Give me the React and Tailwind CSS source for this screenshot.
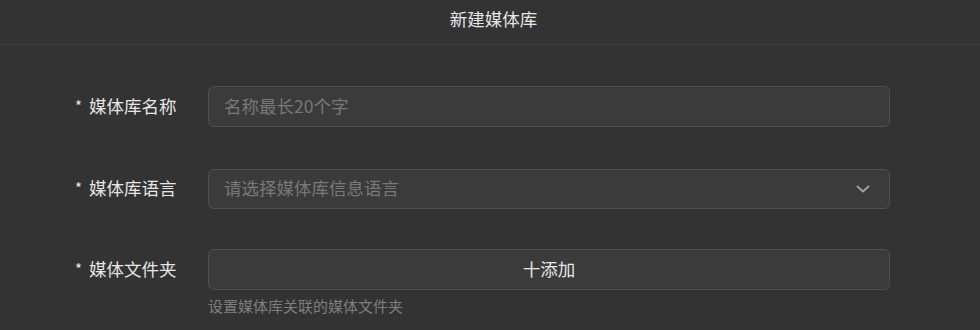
import React from 'react';

const font = { fontFamily: '"Noto Sans CJK SC", "Liberation Sans", sans-serif' };

const Label = ({ children }) => (
    <div className="w-[208px] shrink-0 pl-[75px] flex items-center text-[17.5px] text-[#e6e6e6] whitespace-nowrap">
        <span className="mr-[7px] text-[15px]">*</span>
        {children}
    </div>
);

const App = () => {
    return (
        <div className="w-[980px] h-[330px] bg-[#333333] overflow-hidden" style={font}>
            <div className="h-[45px] border-b border-[#3e3e3e] flex items-center justify-center">
                <span className="text-[17.5px] text-[#e6e6e6] -mt-[5px] ml-[7px]">新建媒体库</span>
            </div>

            <div className="pt-[41px] flex flex-col">
                <div className="flex items-center h-[41px]">
                    <Label>媒体库名称</Label>
                    <div className="w-[682px] h-[41px] rounded-[6px] border border-[#505050] bg-[#3b3b3b] flex items-center px-[15px]">
                        <span className="text-[17.5px] text-[#787878]">名称最长20个字</span>
                    </div>
                </div>

                <div className="flex items-center h-[41px] mt-[41px]">
                    <Label>媒体库语言</Label>
                    <div className="w-[682px] h-[40px] rounded-[6px] border border-[#505050] bg-[#3b3b3b] flex items-center justify-between px-[15px]">
                        <span className="text-[17.5px] text-[#787878]">请选择媒体库信息语言</span>
                        <svg width="16" height="16" viewBox="0 0 16 16" className="mr-[3px]">
                            <path d="M2.5 5.5 L8 10.5 L13.5 5.5" fill="none" stroke="#a0a0a0" strokeWidth="2" strokeLinecap="round" strokeLinejoin="round" />
                        </svg>
                    </div>
                </div>

                <div className="flex items-center h-[41px] mt-[40px]">
                    <Label>媒体文件夹</Label>
                    <button className="w-[682px] h-[41px] rounded-[6px] border border-[#505050] bg-[#3b3b3b] flex items-center justify-center text-[17.5px] text-[#e6e6e6]">
                        十添加
                    </button>
                </div>
                <div className="pl-[208px] mt-[5px] text-[15px] text-[#7e7e7e]">
                    设置媒体库关联的媒体文件夹
                </div>
            </div>
        </div>
    );
};

export default App;
